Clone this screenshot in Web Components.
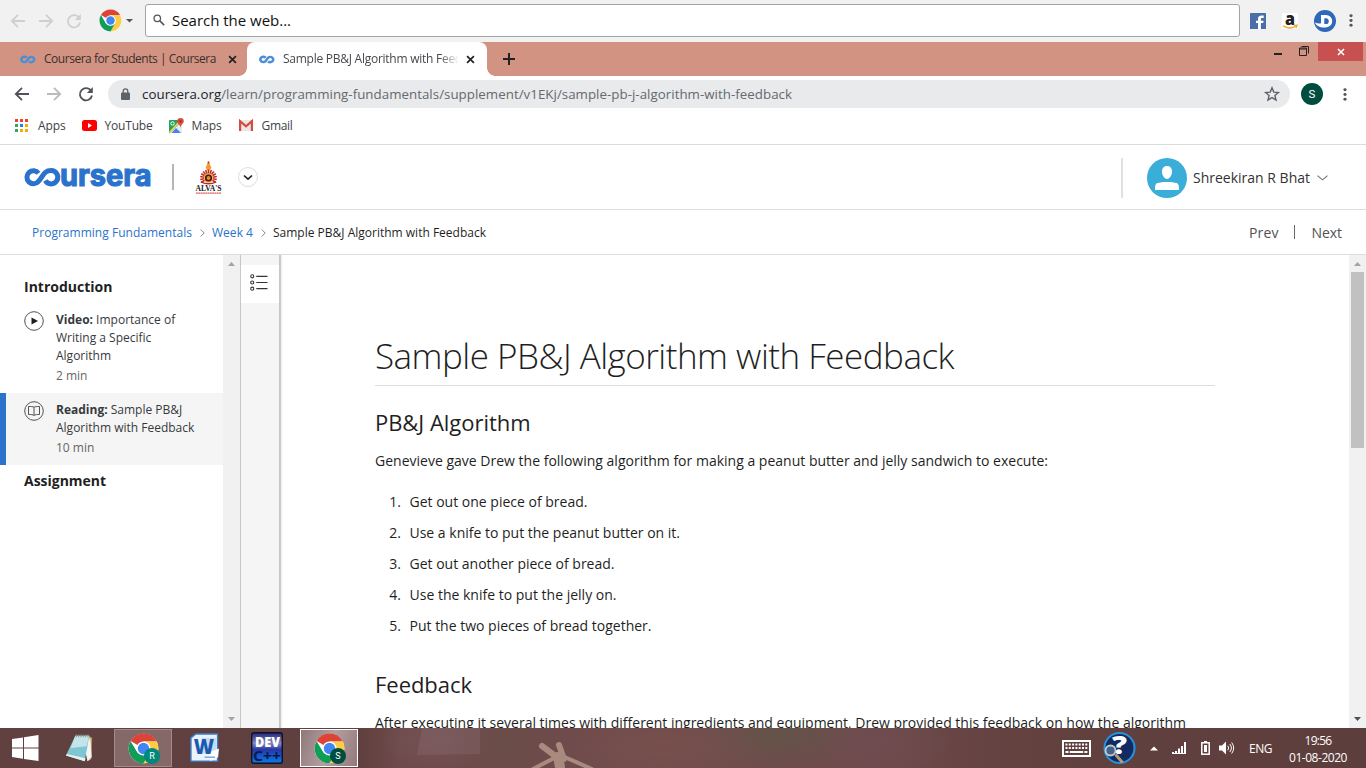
<!DOCTYPE html>
<html lang="en"><head><meta charset="utf-8"><title>Sample PB&amp;J Algorithm with Feedback</title>
<style>html,body{margin:0;height:100%;overflow:hidden;background:#fff}body{font-family:"Open Sans","Noto Sans",sans-serif;font-size:12px;color:#1f1f1f}</style></head><body>
<desktop-screen></desktop-screen>
<script>
const make=(tag,css,html,after)=>customElements.define(tag,class extends HTMLElement{
  connectedCallback(){ if(this.shadowRoot)return; this.attachShadow({mode:'open'}).innerHTML=`<style>*{box-sizing:border-box}${css}</style>`+(typeof html==='function'?html(this):html); if(after)after(this);}
});

/* Text run whose tracking is adjusted to a given advance width. */
make('text-run',':host{display:inline-block;white-space:pre;flex:none}','<slot></slot>',el=>{
  const w=+el.getAttribute('w'); if(!w)return;
  const n=el.textContent.length, natural=el.getBoundingClientRect().width;
  el.style.letterSpacing=((w-natural)/n).toFixed(4)+'px';
});

const chrome=`<circle cx="24" cy="24" r="23" fill="#fff"/><path d="M24 24 4.1 12.5A23 23 0 0 1 44 12.5L44 13H24z" fill="#db4437"/><path d="M44 12.8A23 23 0 0 1 24 47L33.5 29.5 24 13h20z" fill="#ffcd40"/><path d="M4 12.6A23 23 0 0 0 24 47l9.5-17L24 34 14.5 30z" fill="#0f9d58"/><circle cx="24" cy="24" r="11" fill="#fff"/><circle cx="24" cy="24" r="8.8" fill="#4285f4"/>`;
const back='<path d="M15 8H2M8 1.8 1.8 8 8 14.2" fill="none" stroke="currentColor" stroke-width="1.8"/>';
const fwd='<path d="M1 8h13M8 1.8 14.2 8 8 14.2" fill="none" stroke="currentColor" stroke-width="1.8"/>';
const reload='<path d="M13.3 5.2A6.1 6.1 0 1 0 14 9.5" fill="none" stroke="currentColor" stroke-width="1.8"/><path d="M14.8 1v6H8.8z" fill="currentColor"/>';
const rays=[...Array(13)].map((_,i)=>`<path d="M14 17V8.8" transform="rotate(${(i-6)*20} 14 17.5)" stroke="#c4262c" stroke-width="1.6"/>`).join('');
const S={
 back:['0 0 16 16',back],fwd:['0 0 16 16',fwd],reload:['0 0 16 16',reload],chrome:['0 0 48 48',chrome],
 search:['0 0 14 14','<circle cx="5" cy="5" r="3.8" fill="none" stroke="#555" stroke-width="1.5"/><path d="m8 8 5 5" stroke="#555" stroke-width="1.8"/>'],
 caret:['0 0 8 5','<path d="M0 0h8L4 4.5z" fill="#555"/>'],
 fb:['0 0 16 16','<rect width="16" height="16" rx=".6" fill="#4a6ea9"/><path d="M13.7 5V2.5h-2C9 2.500 8 4 8 6v1.700H6V10h2v6h2.900v-6h2.300l.4-2.300h-2.700V6.200c0-.8.3-1.200 1.200-1.200z" fill="#fff"/>'],
 amazon:['0 0 16 16','<rect width="16" height="16" fill="#fff"/><text x="3" y="11.500" font-family="Open Sans" font-weight="800" font-size="17" fill="#222" textLength="10" lengthAdjust="spacingAndGlyphs">a</text><path d="M1 12.800q6 4 12 .7M12 12.500l3-.2-1.200 2.800" fill="none" stroke="#f6a11a" stroke-width="1.300"/>'],
 dee:['0 0 22 22','<circle cx="11" cy="11" r="11" fill="#2e68b8"/><path d="M7 5h5a6 6 0 0 1 0 12.400C7 18 2.500 16.500 1 12.500c2 1 4 1.200 6 .8z" fill="#fff"/><path d="M10.300 8.200h1.500a2.900 2.900 0 0 1 0 5.900h-1.500z" fill="#2e68b8"/>'],
 dots:['0 0 4 14','<circle cx="2" cy="2" r="1.600" fill="#555"/><circle cx="2" cy="7" r="1.600" fill="#555"/><circle cx="2" cy="12" r="1.600" fill="#555"/>'],
 loop:['0 0 16 10','<path d="M6.7 3.100A3 3 0 1 0 6.500 7C8 5.500 8.200 2 11.300 2a3 3 0 1 1-2.200 5.100" fill="none" stroke="#4a8fd6" stroke-width="2.600"/>'],
 close:['0 0 10 10','<path d="m1.200 1.200 7.600 7.600m0-7.600L1.200 8.800" stroke="currentColor" stroke-width="1.900"/>'],
 plus:['0 0 12 12','<path d="M6 0v12M0 6h12" stroke="#222" stroke-width="2"/>'],
 min:['0 0 8 2','<path d="M0 1h8" stroke="#222" stroke-width="2"/>'],
 rest:['0 0 10 10','<path d="M0 3h7.500M.5 2v7.500h7V2zM2.500 .5h7v7" fill="none" stroke="#222"/>'],
 lock:['0 0 9 12','<rect y="4.500" width="9" height="7.500" rx="1" fill="#5f6368"/><path d="M2.200 5V3.200a2.300 2.300 0 0 1 4.600 0V5" fill="none" stroke="#5f6368" stroke-width="1.300"/>'],
 star:['0 0 16 16','<path d="m8 1.900 1.800 4.200 4.600.4-3.500 3 1.100 4.500L8 11.600 4 14l1.100-4.500-3.500-3 4.600-.4z" fill="none" stroke="#5f6368" stroke-width="1.400"/>'],
 apps:['0 0 13 13',[['#ea4335','#ea4335','#ea4335'],['#34a853','#1a86f0','#f9ab00'],['#34a853','#f9ab00','#f9ab00']].map((r,y)=>r.map((c,x)=>`<rect x="${x*5}" y="${y*5}" width="3" height="3" fill="${c}"/>`).join('')).join('')],
 yt:['0 0 15 11','<rect width="15" height="11" rx="2.500" fill="#f00"/><path d="M6 3v5l4-2.500z" fill="#fff"/>'],
 maps:['0 0 15 15','<rect y="2" width="13" height="13" rx="1" fill="#1fa463"/><path d="M1 15 12 4l1 1v9.500l-.5.5z" fill="#e8eaed"/><path d="m2.500 15 4.500-5 5 5z" fill="#4285f4"/><path d="M0 14 10 3h2L1.500 15z" fill="#ffd04b"/><circle cx="3.500" cy="5.500" r="1.700" fill="none" stroke="#fff"/><path d="M11.500 0A3.300 3.300 0 0 0 8.200 3.300c0 2.400 2.800 3 3.300 6.400.5-3.400 3.300-4 3.300-6.400A3.300 3.300 0 0 0 11.500 0z" fill="#dd4b3e"/><circle cx="11.500" cy="3.300" r="1.100" fill="#8c2a22"/>'],
 gmail:['0 0 14 11','<path d="M0 0h14v11H0z" fill="#e9e7e7"/><path d="M1.100 11V1.200L7 6.300l5.900-5.100V11" fill="none" stroke="#d54b3d" stroke-width="2.200"/>'],
 alva:['0 0 28 34','<path d="m14 0 3 7-3 4-3-4z" fill="#f39a2b"/><circle cx="14" cy="1.500" r="1" fill="#c4262c"/>'+rays+'<circle cx="14" cy="17.500" r="5" fill="#f5b342"/><circle cx="14" cy="17.500" r="3.700" fill="#3a1b16"/><circle cx="14" cy="17.500" r="2" fill="#f08a2c"/><path d="M6 21.500q8 4 16 0" stroke="#c4262c" stroke-width="1.500" fill="none"/><text x=".5" y="31" font-family="Liberation Serif" font-size="8" font-weight="700" fill="#222" textLength="27" lengthAdjust="spacingAndGlyphs">ALVA\'S</text><path d="M1 33h26" stroke="#df5b5b" stroke-width="1.300" stroke-dasharray="2 .4"/>'],
 circledown:['0 0 20 20','<circle cx="10" cy="10" r="9.500" fill="#fff" stroke="#ddd"/><path d="m6 8.500 4 3.700 4-3.700" fill="none" stroke="#222" stroke-width="1.700"/>'],
 user:['0 0 40 40','<circle cx="20" cy="20" r="20" fill="#3badd9"/><path d="M20 8c3.600 0 5 2.500 5 5.800S22.800 21 20 21s-5-3.900-5-7.200S16.400 8 20 8z" fill="#fff"/><path d="M8 32c0-5 .5-6.300 2.500-7 4-1.500 15-1.500 19 0 2 .7 2.500 2 2.500 7z" fill="#fff"/>'],
 down:['0 0 11 7','<path d="m.5 .7 5 5 5-5" fill="none" stroke="#777" stroke-width="1.100"/>'],
 right:['0 0 5 8','<path d="m.7 .5 3.500 3.500L.7 7.500" fill="none" stroke="#888"/>'],
 play:['0 0 20 20','<circle cx="10" cy="10" r="9.300" fill="#fff" stroke="#525252"/><path d="M7.500 6.500v7l6.500-3.500z" fill="#1f1f1f"/>'],
 book:['0 0 20 20','<circle cx="10" cy="10" r="9.300" fill="none" stroke="#525252"/><path d="M10 6.300C9 5.500 7 5.500 4.500 5.500v8c2.500 0 4.500 0 5.500 1 1-1 3-1 5.500-1v-8c-2.500 0-4.500 0-5.500.8zm0 0v8" fill="none" stroke="#525252"/>'],
 list:['0 0 18 18','<g fill="none" stroke="#333" stroke-width="1.100"><circle cx="2.300" cy="2.500" r="1.600"/><circle cx="2.300" cy="9" r="1.600"/><circle cx="2.300" cy="15.500" r="1.600"/><path d="M6.500 2.500H18M6.500 9H18M6.500 15.500H18"/></g>'],
 win:['0 0 27 26','<path d="M0 4 11 2.400v10.100H0zM12 2.200 26.500 0v12.500H12zM0 13.500h11v10.200L0 22zM12 13.500h14.500V26L12 23.900z" fill="#fff"/>'],
 note:['0 0 32 32','<path d="m23 2 6 3-1 23-4 2z" fill="#b99a58"/><path d="m27 5 1.500 20.500L24 30l-4-18z" fill="#f4f4f4"/><path d="M11 3h15l-5 27L1 24z" fill="#7fc5d2"/><path d="M11 3h15l-3 11Q12 15 6 16z" fill="#c3e5ea"/><path d="m2 22.500 20 4.300-1 3.200-20-6z" fill="#e5f3f3"/><path d="M12 1.500v3m2.500-3v3m2.500-3v3m2.500-3v3m2.500-3v3m2.500-3v3" stroke="#88908f"/>'],
 word:['0 0 30 30','<path d="M1 4 6 0h22.500v28H1z" fill="#eaf3fb" stroke="#3e7cc7" stroke-width="1.400"/><path d="M12 4h15v16H12z" fill="#c6ddf1"/><path d="m20 19 10-4-1 9-8 4z" fill="#fff"/><text x="4" y="20.500" font-family="Open Sans" font-weight="800" font-size="22" textLength="21" lengthAdjust="spacingAndGlyphs" fill="#1c59ae">W</text><path d="M15 24h11" stroke="#7ba7d5" stroke-width="1.500"/>'],
 dev:['0 0 32 32','<defs><linearGradient id="g" x2="0" y2="1"><stop stop-color="#23247a"/><stop offset=".35" stop-color="#8587ba"/><stop offset=".55" stop-color="#2737a5"/><stop offset="1" stop-color="#0a7be8"/></linearGradient></defs><rect x=".7" y=".7" width="30.600" height="30.600" rx="2" fill="url(#g)" stroke="#101028" stroke-width="1.400"/><text x="4" y="15" font-family="Open Sans" font-weight="800" font-size="14" textLength="25" lengthAdjust="spacingAndGlyphs" fill="#fff">DEV</text><text x="2" y="29" font-family="Open Sans" font-weight="700" font-size="15" textLength="28" lengthAdjust="spacingAndGlyphs" fill="#071a50">C++</text>'],
 kbd:['0 0 29 17','<path d="M0 0h29v17H0z" fill="#fff"/><path d="M2 2h25v13H2z" fill="#5f403f"/><path d="M3.500 4.500h22M3.500 8h22" stroke="#fff" stroke-width="2" stroke-dasharray="2 1.300"/><path d="M3.500 12h3m1.200 0h13.500m1.200 0h3" stroke="#fff" stroke-width="2"/>'],
 help:['0 0 32 32','<circle cx="16.500" cy="16" r="15" fill="#102c63" stroke="#2693df" stroke-width="2"/><text x="9" y="22" font-family="Open Sans" font-weight="800" font-size="25" textLength="15" lengthAdjust="spacingAndGlyphs" fill="#fff">?</text><circle cx="7.500" cy="18.500" r="5" fill="#466286" stroke="#c5c9ce" stroke-width="1.800"/><path d="m12.500 22.500 7 8" stroke="#b99b70" stroke-width="3"/>'],
 up:['0 0 8 5','<path d="M0 4.500h8L4 .500z" fill="#fff"/>'],
 net:['0 0 15 12','<path d="M1 12v-2m3 2V9m3 3V6.500m3 5.500V4m3 8V0" stroke="#fff" stroke-width="2"/><path d="M0 11.500h14" stroke="#fff"/>'],
 bat:['0 0 9 14','<path d="M3 0h3v1.500H3z" fill="#fff"/><rect x=".8" y="1.800" width="7.400" height="11.400" fill="none" stroke="#fff" stroke-width="1.500"/><path d="M3 4h3v7H3z" fill="#fff"/>'],
 vol:['0 0 15 14','<path d="M0 4.500h3L7 .500v13L3 9.500H0z" fill="#fff"/><path d="M8.800 4.700q1.700 2.300 0 4.600M10.800 3q3.200 4 0 8M12.700 1.500q4 5.500 0 11" fill="none" stroke="#fff"/>'],
 tri:['0 0 7 4','<path d="M0 4h7L3.500 0z" fill="currentColor"/>'],
 trid:['0 0 7 4','<path d="M0 0h7L3.500 4z" fill="currentColor"/>']
};
make('app-icon',':host{display:block;flex:none}svg{display:block;overflow:visible;width:100%;height:100%}',el=>{
  const [vb,body]=S[el.getAttribute('name')]; const w=el.getAttribute('w'),h=el.getAttribute('h')||w;
  return `<style>:host{width:${w}px;height:${h}px}</style><svg viewBox="${vb}" preserveAspectRatio="none">${body}</svg>`;});

make('search-bar',':host{display:flex;align-items:center;height:42px;box-sizing:border-box;background:#f1f1f1;padding:0 13px 1px 10px;color:#cfcfcf}.a{margin-right:12px}.g{margin:0 4px 0 17px}.box{flex:1;height:33px;margin:0 10px 0 12px;border:1px solid #a3a3a3;border-radius:3px;background:#fff;display:flex;align-items:center;gap:7px;padding:0 0 2px 7px;color:#111;font-size:15px}.r{margin-right:16px}',
 `<app-icon class="a" name="back" w="16"></app-icon><app-icon class="a" name="fwd" w="16"></app-icon><app-icon name="reload" w="16"></app-icon><app-icon class="g" name="chrome" w="23"></app-icon><app-icon name="caret" w="7" h="4"></app-icon>
 <div class="box"><app-icon name="search" w="12"></app-icon><text-run w="119">Search the web...</text-run></div><app-icon class="r" name="fb" w="16"></app-icon><app-icon class="r" name="amazon" w="16"></app-icon><app-icon name="dee" w="22" style="margin-right:13px"></app-icon><app-icon name="dots" w="4" h="13"></app-icon>`);

make('tab-strip',`:host{display:flex;height:34px;background:#d39383;color:#3a2f2d}
 .t{display:flex;align-items:center;height:34px}.one{width:247px;padding-left:20px}.two{width:240px;background:#fff;border-radius:8px 8px 0 0;padding-left:12px;position:relative;color:#45484c}
 .two:before,.two:after{content:"";position:absolute;bottom:0;width:8px;height:8px}.two:before{left:-8px;background:radial-gradient(circle at 0 0,transparent 7.5px,#fff 8px)}.two:after{right:-8px;background:radial-gradient(circle at 100% 0,transparent 7.5px,#fff 8px)}
 text-run{margin-bottom:1px}.lab{margin:0 12px 1px 8px}.clip{width:176px;overflow:hidden;margin:0 7px 0 8px;-webkit-mask:linear-gradient(90deg,#000 157px,transparent 176px)}app-icon{color:#222}.plus{margin:11px 0 0 16px}.w{margin-left:auto;display:flex;align-items:flex-start;padding-right:3px}.x{width:45px;height:19px;background:#c75050;display:flex;align-items:center;justify-content:center}.x app-icon{color:#fff}`,
 `<div class="t one"><app-icon name="loop" w="16" h="9"></app-icon><text-run class="lab" w="172">Coursera for Students | Coursera</text-run><app-icon name="close" w="9"></app-icon></div>
 <div class="t two"><app-icon name="loop" w="16" h="9"></app-icon><div class="clip"><text-run w="204">Sample PB&amp;J Algorithm with Feedback</text-run></div><app-icon name="close" w="9"></app-icon></div><app-icon class="plus" name="plus" w="12"></app-icon>
 <div class="w"><app-icon name="min" w="8" h="2" style="margin:11px 17px 0 0"></app-icon><app-icon name="rest" w="10" style="margin:4px 9px 0 0"></app-icon><div class="x"><app-icon name="close" w="8" h="8"></app-icon></div></div>`);

make('address-bar',`:host{display:flex;align-items:center;height:36px;box-sizing:border-box;padding:0 19.500px 0 14px;color:#505357}.p{flex:1;height:28px;margin:0 11px 0 14px;border-radius:14px;background:#e9eaec;display:flex;align-items:center;padding:0 10px 0 13px;font-size:13.3px;color:#66696d}.p b{font-weight:400;color:#202124}.p text-run{margin-left:12px}.s{margin-left:auto}.av{width:22px;height:22px;border-radius:50%;background:#004d40;color:#fff;display:grid;place-items:center;font:11.500px Roboto,sans-serif;margin-right:19.500px}`,
 `<app-icon name="back" w="16" style="margin-right:16px"></app-icon><app-icon name="fwd" w="16" style="color:#bbb;margin-right:16px"></app-icon><app-icon name="reload" w="16"></app-icon><div class="p"><app-icon name="lock" w="9" h="12"></app-icon><text-run w="650"><b>coursera.org</b>/learn/programming-fundamentals/supplement/v1EKj/sample-pb-j-algorithm-with-feedback</text-run><app-icon class="s" name="star" w="16"></app-icon></div><div class="av">S</div><app-icon name="dots" w="4" h="13"></app-icon>`);

make('bookmark-bar',`:host{display:flex;align-items:center;height:33px;padding:0 15px 5px;border-bottom:1px solid #dadce0;color:#404347;box-sizing:border-box}text-run{margin:0 16px 0 9px}`,
 `<app-icon name="apps" w="13"></app-icon><text-run w="27.500" style="margin-left:10px">Apps</text-run><app-icon name="yt" w="15" h="11"></app-icon><text-run w="48" style="margin-left:8px">YouTube</text-run><app-icon name="maps" w="15"></app-icon><text-run w="30" style="margin:0 17px 0 8px">Maps</text-run><app-icon name="gmail" w="14" h="11"></app-icon><text-run w="31">Gmail</text-run>`);

make('coursera-logo',`:host{display:block;width:128px;height:22px;flex:none}svg{display:block;overflow:visible}`,
 `<svg width="128" height="22"><path d="M14.500 7.200A6.500 6.500 0 1 0 14.300 15.600C19 10.800 19.500 4.500 27.200 4.500A6.700 6.700 0 1 1 21.300 14.500" fill="none" stroke="#2a73cc" stroke-width="5"/><text x="36" y="19.500" font-family="Inter" font-weight="700" font-size="30" fill="#2a73cc" stroke="#2a73cc" stroke-width="1.200" textLength="91.500" lengthAdjust="spacingAndGlyphs">ursera</text></svg>`);

make('site-header',`:host{display:flex;align-items:center;height:65px;padding:0 38px 0 24px;border-bottom:1px solid #ddd;box-sizing:border-box;font-size:14px;color:#333}.v{width:2px;height:26px;background:#b5b5b5;margin:0 21px 0 20px}.v2{width:2px;height:40px;background:#e0e0e0;margin:0 24px 0 auto}.u{margin:0 7px 0 6px}.d{margin-top:2px}`,
 `<coursera-logo></coursera-logo><div class="v"></div><app-icon name="alva" w="27" h="33"></app-icon><app-icon name="circledown" w="20" style="margin-left:16px"></app-icon><div class="v2 d"></div><app-icon class="d" name="user" w="40"></app-icon><text-run class="u" w="117">Shreekiran R Bhat</text-run><app-icon class="d" name="down" w="11" h="6"></app-icon>`);

make('crumb-bar',`:host{display:flex;align-items:center;height:45px;padding:0 24px 0 32px;border-bottom:1px solid #ddd;box-sizing:border-box;color:#1f1f1f}.l{color:#2a73cc}.c{margin:2px 7px 0 8px}.n{font-size:14px;color:#525252}.p{margin-left:auto}.v{width:1px;height:14px;background:#666;margin:0 17px 0 15px}`,
 `<text-run class="l" w="160">Programming Fundamentals</text-run><app-icon class="c" name="right" w="5" h="8"></app-icon><text-run class="l" w="41">Week 4</text-run><app-icon class="c" name="right" w="5" h="8"></app-icon><text-run w="213">Sample PB&amp;J Algorithm with Feedback</text-run><text-run class="n p" w="29.500">Prev</text-run><div class="v"></div><text-run class="n" w="30.500">Next</text-run>`);

make('scroll-bar',`:host{display:flex;flex-direction:column;align-items:center;width:17px;flex:none;background:#f1f1f1;padding:7px 0 7px;box-sizing:border-box;color:#a3a3a3}.t{width:13px;height:176px;background:#c1c1c1;margin-top:6px}.b{margin-top:auto}`,
 el=>`<app-icon name="tri" w="7" h="4"></app-icon>${el.hasAttribute('thumb')?'<div class="t"></div>':''}<app-icon class="b" name="trid" w="7" h="4" ${el.hasAttribute('thumb')?'style="color:#505050"':''}></app-icon>`);

make('lesson-item',`:host{display:flex;gap:12px;padding:8px 0 8px 24px;line-height:18px;color:#373a3c}:host([active]){background:#f5f5f5;border-left:6px solid #2a73cc;padding-left:18px}.m{margin-top:2px;color:#666}`,
 el=>`<app-icon name="${el.getAttribute('icon')}" w="20"></app-icon><div><slot></slot><div class="m">${el.getAttribute('time')}</div></div>`);

make('lesson-nav',`:host{display:block;width:223px;flex:none;padding-top:16px;box-sizing:border-box}h3{margin:0;padding-left:24px;font-size:14px;font-weight:700;line-height:32px;color:#1f1f1f}b{font-weight:700}`,
 `<h3><text-run w="88.500">Introduction</text-run></h3><lesson-item icon="play" time="2 min"><b>Video:</b> Importance of<br>Writing a Specific<br>Algorithm</lesson-item><lesson-item active icon="book" time="10 min"><b>Reading:</b> Sample PB&amp;J<br>Algorithm with Feedback</lesson-item><h3><text-run w="82">Assignment</text-run></h3>`);

make('notes-rail',`:host{display:block;width:43px;flex:none;border-left:1px solid #c8c8c8;background:linear-gradient(90deg,#f5f5f5 38px,#c4c4c4 38px,#cdcdcd 40px,#ececec 40px,#fff 42px);padding-top:10px;box-sizing:border-box}div{width:38px;height:38px;background:#fff;display:flex;align-items:center;padding:0 0 4px 9px}`,
 `<div><app-icon name="list" w="17.500" h="17"></app-icon></div>`);

make('reading-page',`:host{display:block;flex:1;padding:80px 134px 0 92px;overflow:hidden;color:#1f1f1f;font-size:14px;line-height:22px}h1{margin:0;font-size:35px;font-weight:300;line-height:42px;padding-bottom:8px;border-bottom:1px solid #ddd}h2{margin:21px 0 13px;font-size:22px;font-weight:400;line-height:30px}h2.f{margin-top:28px}p{margin:0}ol{margin:14px 0 0;padding:0;list-style:none}.row{display:flex;line-height:31px}.row span{width:26px;text-align:right;margin-right:8.500px}text-run{vertical-align:top}`,
 `<h1><text-run w="579">Sample PB&amp;J Algorithm with Feedback</text-run></h1><h2><text-run w="155.500">PB&amp;J Algorithm</text-run></h2><p><text-run w="673">Genevieve gave Drew the following algorithm for making a peanut butter and jelly sandwich to execute:</text-run></p><ol>${[['Get out one piece of bread.',178],['Use a knife to put the peanut butter on it.',270.5],['Get out another piece of bread.',205],['Use the knife to put the jelly on.',207],['Put the two pieces of bread together.',242]].map((t,i)=>`<li class="row"><span>${i+1}.</span><text-run w="${t[1]}">${t[0]}</text-run></li>`).join('')}</ol><h2 class="f"><text-run w="97">Feedback</text-run></h2><p><text-run w="811">After executing it several times with different ingredients and equipment, Drew provided this feedback on how the algorithm</text-run></p>`);

make('task-button',`:host{display:grid;place-items:center;position:relative;width:58px;height:38px;box-sizing:border-box;border:1px solid #a58a8a;background:#856868}:host([on]){border-color:#fff;background:linear-gradient(110deg,#917879,#b29fa0 50%,#94797b)}i{position:absolute;left:29px;top:18px;width:16px;height:16px;border-radius:50%;background:#00897b;color:#fff;display:grid;place-items:center;font:normal 9px Roboto,sans-serif}:host([on]) i{background:#004d40}`,
 `<app-icon name="chrome" w="31"></app-icon><i><slot></slot></i>`);

make('task-bar',`:host{display:flex;align-items:center;height:40px;box-sizing:border-box;padding:0 19px 0 12px;color:#fff;position:relative;overflow:hidden;background:radial-gradient(ellipse 60px 55px at 505px 18px,#6a4d48,transparent),radial-gradient(ellipse 110px 45px at 660px 20px,#77504d,transparent),radial-gradient(ellipse 90px 40px at 775px 5px,#655249 20%,transparent),radial-gradient(ellipse 60px 30px at 440px 12px,#745356,transparent),radial-gradient(ellipse 80px 40px at 875px 15px,#6f4c50,transparent),linear-gradient(90deg,#61413f,#60403f 360px,#6e4a4b 400px,#704b4c 850px,#62413f 1030px,#5c3e3c)}
 .bg{position:absolute;left:400px;top:0}app-icon,task-button,.clock,.e{position:relative}.clock{display:grid;justify-items:center;line-height:17px;margin-left:17px;width:58px;padding-top:1px}`,
 `<svg class="bg" width="460" height="40"><path d="M22 0h58v26L17 27z" fill="#8a6d70" opacity=".35"/><g fill="none" stroke="#a88a7f" stroke-linecap="round"><path d="m142 18 16 12M159 17l5 14" stroke-width="6"/><path d="m158 28-25 13" stroke-width="4"/><path d="m160 27 32 14" stroke-width="4"/><path d="m158 29 2 10" stroke-width="10"/></g></svg>
 <app-icon name="win" w="27" h="26"></app-icon><app-icon name="note" w="30" style="margin-left:26px;"></app-icon><task-button style="margin-left:19px">R</task-button><app-icon name="word" w="29" style="margin-left:18px"></app-icon><app-icon name="dev" w="32" style="margin-left:32px"></app-icon><task-button on style="margin-left:17px">S</task-button>
 <app-icon name="kbd" w="29" h="17" style="margin-left:auto"></app-icon><app-icon name="help" w="32" style="margin-left:12px"></app-icon><app-icon name="up" w="8" h="5" style="margin-left:15px"></app-icon><app-icon name="net" w="15" h="12" style="margin-left:14px"></app-icon><app-icon name="bat" w="9" h="14" style="margin-left:14px"></app-icon><app-icon name="vol" w="15" h="14" style="margin-left:9px"></app-icon><text-run class="e" w="23" style="margin-left:15px">ENG</text-run><div class="clock"><text-run w="27">19:56</text-run><text-run w="58">01-08-2020</text-run></div>`);

make('desktop-screen',`:host{display:flex;flex-direction:column;width:1366px;height:768px;overflow:hidden;background:#fff}main{display:flex;flex:1 1 0;min-height:0;overflow:hidden}search-bar,tab-strip,address-bar,bookmark-bar,site-header,crumb-bar,task-bar{flex:none}`,
 `<search-bar></search-bar><tab-strip></tab-strip><address-bar></address-bar><bookmark-bar></bookmark-bar><site-header></site-header><crumb-bar></crumb-bar><main><lesson-nav></lesson-nav><scroll-bar></scroll-bar><notes-rail></notes-rail><reading-page></reading-page><scroll-bar thumb></scroll-bar></main><task-bar></task-bar>`);
</script></body></html>
